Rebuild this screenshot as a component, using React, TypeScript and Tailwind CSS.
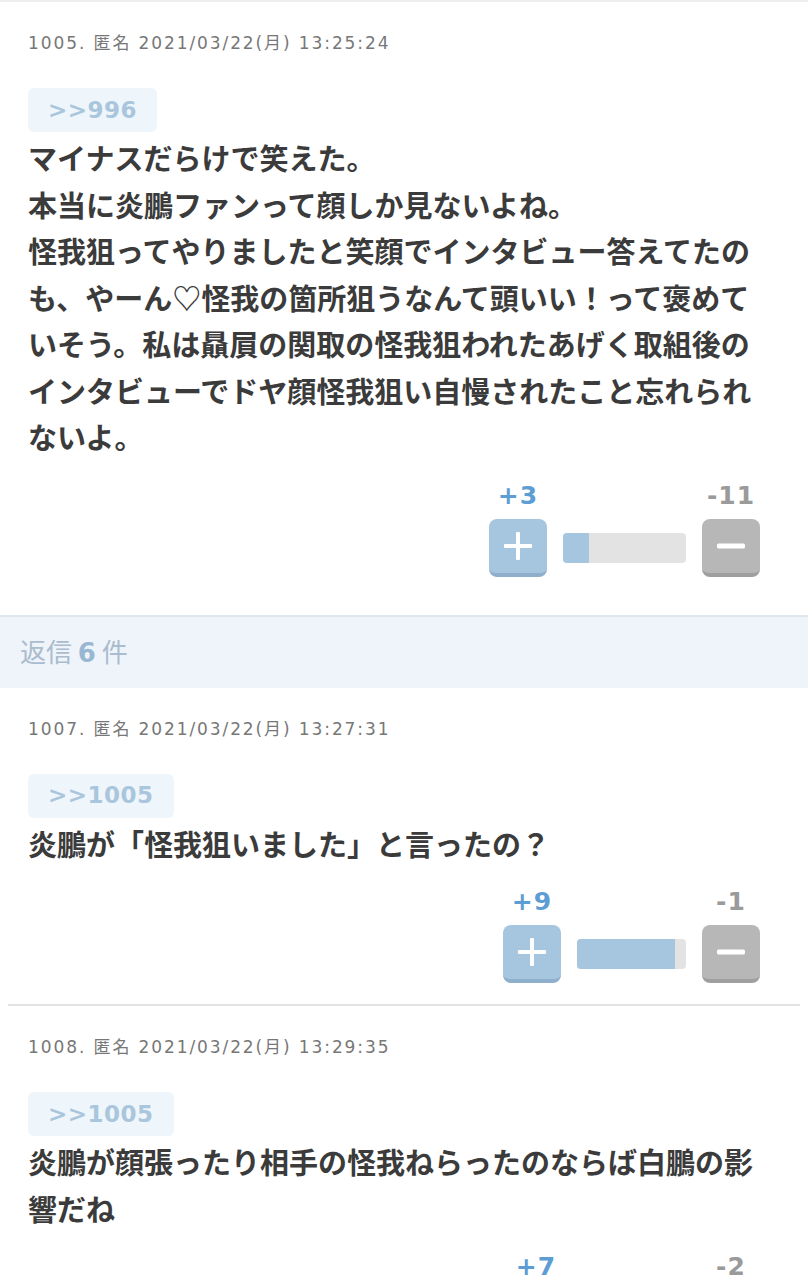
import React from "react";

type Comment = {
  no: number;
  date: string;
  quote: string;
  lines: string[];
  plus: number;
  minus: number;
  barWidth: number;
};

const comments: Comment[] = [
  {
    no: 1005,
    date: "2021/03/22(月) 13:25:24",
    quote: ">>996",
    lines: [
      "マイナスだらけで笑えた。",
      "本当に炎鵬ファンって顔しか見ないよね。",
      "怪我狙ってやりましたと笑顔でインタビュー答えてたの",
      "も、やーん♡怪我の箇所狙うなんて頭いい！って褒めて",
      "いそう。私は贔屓の関取の怪我狙われたあげく取組後の",
      "インタビューでドヤ顔怪我狙い自慢されたこと忘れられ",
      "ないよ。",
    ],
    plus: 3,
    minus: 11,
    barWidth: 123,
  },
  {
    no: 1007,
    date: "2021/03/22(月) 13:27:31",
    quote: ">>1005",
    lines: ["炎鵬が「怪我狙いました」と言ったの？"],
    plus: 9,
    minus: 1,
    barWidth: 109,
  },
  {
    no: 1008,
    date: "2021/03/22(月) 13:29:35",
    quote: ">>1005",
    lines: ["炎鵬が顔張ったり相手の怪我ねらったのならば白鵬の影", "響だね"],
    plus: 7,
    minus: 2,
    barWidth: 105,
  },
];

const latin = { fontFamily: '"DejaVu Sans", "Noto Sans CJK JP", sans-serif' };
const cjk = { fontFamily: '"Noto Sans CJK JP", "DejaVu Sans", sans-serif' };

function VoteBox({ c }: { c: Comment }) {
  const ratio = c.plus / (c.plus + c.minus);
  return (
    <div className="flex justify-end pr-5 mt-[21px]">
      <div className="flex flex-col">
        <div className="flex items-center h-[30px] text-[25px] font-bold tracking-[1px]" style={latin}>
          <div className="w-[58px] text-center text-[#5c9dd3]">+{c.plus}</div>
          <div style={{ width: c.barWidth + 32 }} />
          <div className="w-[58px] text-center text-[#9a9a9a]">-{c.minus}</div>
        </div>
        <div className="flex items-center gap-4 mt-2">
          <div className="w-[58px] h-[58px] rounded-lg bg-[#a6c6e0] border-b-4 border-[#8fb0cc] flex items-center justify-center">
            <svg width="30" height="30" viewBox="0 0 30 30">
              <rect x="13" y="1" width="4" height="28" rx="1" fill="#fff" />
              <rect x="1" y="13" width="28" height="4" rx="1" fill="#fff" />
            </svg>
          </div>
          <div className="h-[30px] rounded bg-[#e3e3e3] overflow-hidden" style={{ width: c.barWidth }}>
            <div className="h-full bg-[#a6c6e0]" style={{ width: `${ratio * 100}%` }} />
          </div>
          <div className="w-[58px] h-[58px] rounded-lg bg-[#b7b7b7] border-b-4 border-[#9f9f9f] flex items-center justify-center">
            <svg width="30" height="30" viewBox="0 0 30 30">
              <rect x="1" y="12.5" width="28" height="5" rx="1.5" fill="#fff" />
            </svg>
          </div>
        </div>
      </div>
    </div>
  );
}

function CommentBlock({ c }: { c: Comment }) {
  return (
    <div className="px-7 pt-[29px] pb-[21px]">
      <div className="text-[17px] leading-6 tracking-[1.9px] text-[#777]" style={latin}>
        {c.no}. 匿名 {c.date}
      </div>
      <div className="mt-[33px] inline-flex h-11 items-center rounded-md bg-[#eef5fb] px-5">
        <span className="text-[23px] font-bold tracking-[0.5px] text-[#a9c6dc]" style={latin}>
          {c.quote}
        </span>
      </div>
      <div className="mt-[2px] text-[29px] leading-[46.5px] font-bold text-[#3b3b3b]" style={cjk}>
        {c.lines.map((l, i) => (
          <div key={i} className="whitespace-nowrap">
            {l}
          </div>
        ))}
      </div>
      <VoteBox c={c} />
    </div>
  );
}

export default function App() {
  return (
    <div className="w-[808px] h-[1280px] overflow-hidden bg-white">
      <div className="h-[2px] bg-[#eeeeee]" />
      <CommentBlock c={comments[0]} />
      <div className="mt-[17px] h-[73px] border-t-2 border-[#dfe7ef] bg-[#eef4fa] flex items-center px-5">
        <span className="text-[26px] text-[#aabccd]" style={cjk}>
          返信 <span className="font-bold text-[#9ab7d2]" style={latin}>6</span> 件
        </span>
      </div>
      <CommentBlock c={comments[1]} />
      <div className="mx-2 h-[2px] bg-[#e3e3e3]" />
      <CommentBlock c={comments[2]} />
    </div>
  );
}
